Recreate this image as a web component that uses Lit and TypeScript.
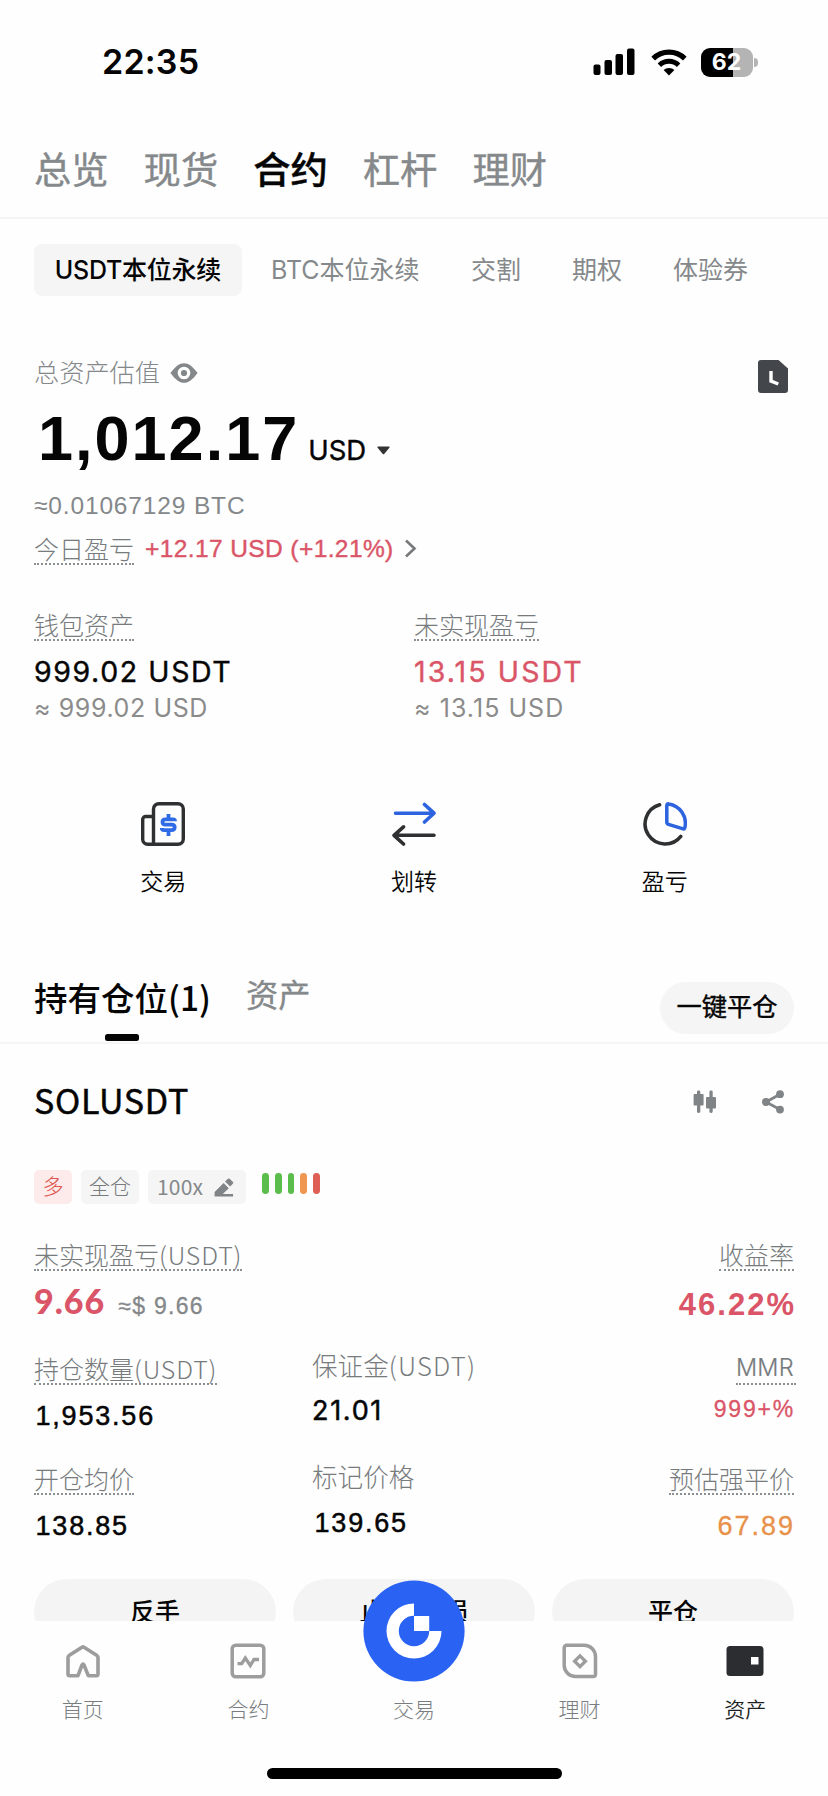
import { LitElement, html, css } from "lit";
import { customElement } from "lit/decorators.js";

const icons = {
  signal: html`<svg width="42" height="28" viewBox="0 0 42 28"><rect x="0.5" y="16.5" width="7" height="10.5" rx="2"/><rect x="11.5" y="12" width="7.5" height="15" rx="2"/><rect x="22.5" y="6" width="7.5" height="21" rx="2"/><rect x="34" y="0.5" width="7.5" height="26.5" rx="2"/></svg>`,
  wifi: html`<svg width="36" height="27" viewBox="0 0 36 27" fill="none" stroke="#000"><path d="M2.2 9.6a22.6 22.6 0 0 1 31.6 0" stroke-width="5.2"/><path d="M8.4 16.2a13.8 13.8 0 0 1 19.2 0" stroke-width="5"/><path d="M18 26.6l-5.4-5.5a7.8 7.8 0 0 1 10.8 0z" fill="#000" stroke="none"/></svg>`,
  eye: html`<svg width="28" height="20" viewBox="0 0 28 20"><path fill="#84888a" d="M.4 10C5.500 3.200 9.500.2 14 .2S22.500 3.200 27.600 10C22.500 16.800 18.500 19.800 14 19.800S5.500 16.800.4 10z"/><circle cx="14" cy="10" r="4.700" fill="#84888a" stroke="#fff" stroke-width="3.200"/></svg>`,
  history: html`<svg width="30" height="33" viewBox="0 0 30 33"><path fill="#43474b" d="M3 0h17.500L30 8.500V30a3 3 0 0 1-3 3H3a3 3 0 0 1-3-3V3a3 3 0 0 1 3-3z"/><path d="M13 11v10l7.300 3" fill="none" stroke="#fff" stroke-width="3.400"/></svg>`,
  caret: html`<svg width="13" height="9" viewBox="0 0 13 9"><path fill="#333" d="M1 .5h11q1 .3.4 1.200L7.200 8q-.7.7-1.400 0L.6 1.700Q0 .8 1 .5z"/></svg>`,
  chevron: html`<svg width="13" height="19" viewBox="0 0 13 19"><path d="M2 1.500l8.500 8L2 17.500" fill="none" stroke="#77797b" stroke-width="2.600"/></svg>`,
  trade: html`<svg width="44" height="44" viewBox="0 0 44 44" fill="none" stroke-width="3.400"><path stroke="#2f3031" d="M12.500 42.300V7a5.300 5.300 0 0 1 5.300-5.300H37A5.300 5.300 0 0 1 42.300 7v30a5.300 5.300 0 0 1-5.300 5.300H6.700a5 5 0 0 1-5-5V17.500a3 3 0 0 1 3-3h7.800"/><path stroke="#2f6be6" stroke-width="3.800" d="M34 19.200v-.2q0-1.700-2-1.700h-7.500q-3 0-3 2.700t3 2.600h6q3.200 0 3.200 2.700 0 2.800-3.200 2.800H23q-2.200 0-2.200-2.200M27.500 12v5M27.500 28.500v5.500"/></svg>`,
  transfer: html`<svg width="44" height="44" viewBox="0 0 44 44" fill="none" stroke-width="3.600" stroke-linecap="round" stroke-linejoin="round"><path stroke="#2d63de" d="M3.500 11.200h38M32.500 2.500l9.500 8.700-9.500 8.800"/><path stroke="#2f3031" d="M42 33.300H3M11.500 24.800L2 33.300l9.500 8.700"/></svg>`,
  pie: html`<svg width="44" height="44" viewBox="0 0 44 44" fill="none" stroke-width="3.500" stroke-linecap="round" stroke-linejoin="round"><path stroke="#2f3031" d="M16.600 2.700a20 20 0 1 0 21.200 31.600"/><path stroke="#2d63de" d="M23.800 3.500q0-2 2-1.600A19.500 19.500 0 0 1 42 25q-.3 2.500-2.600 1.700L25.500 22.300q-1.700-.5-1.700-2.300z"/></svg>`,
  candles: html`<svg width="24" height="24" viewBox="0 0 24 24" fill="#808486"><rect x=".6" y="4" width="10" height="11.500" rx="1"/><rect x="4" y=".5" width="3.300" height="22.500" rx="1.400"/><rect x="13" y="7" width="10" height="11.500" rx="1"/><rect x="16.400" y=".5" width="3.300" height="22.500" rx="1.400"/></svg>`,
  share: html`<svg width="24" height="24" viewBox="0 0 24 24" fill="#808486"><circle cx="5" cy="12" r="4"/><circle cx="19" cy="4.200" r="3.900"/><circle cx="19" cy="19.600" r="3.900"/><path d="M19 4.200L5 12l14 7.600" fill="none" stroke="#808486" stroke-width="2.800"/></svg>`,
  pencil: html`<svg width="20" height="19" viewBox="0 0 20 19" fill="#808486"><path d="M.6 18.500V14L9.600 5l5.200 5.200-6 5.800h10.300v2.500zM11 3.600L14 .8q.8-.6 1.600 0L19 4q.7.8 0 1.600l-2.800 3z"/></svg>`,
  home: html`<svg width="36" height="36" viewBox="0 0 36 36" fill="none" stroke="#9d9d9d" stroke-width="3.600" stroke-linejoin="round"><path d="M3 14.500q0-1.200 1-1.900L17 4.200q1-.6 2 0l13 8.400q1 .7 1 1.900V31q0 1.700-1.700 1.700h-8L19 22q-1-2-2 0l-4 10.700H4.700Q3 32.700 3 31z"/></svg>`,
  contract: html`<svg width="36" height="36" viewBox="0 0 36 36" fill="none" stroke="#9d9d9d"><rect x="2.200" y="2.200" width="31.600" height="31.600" rx="3.500" stroke-width="3.500"/><path stroke-width="3.300" d="M7.500 20.700h4.200l3.600-5.700 5 7.500 3.700-6h5"/></svg>`,
  earn: html`<svg width="36" height="36" viewBox="0 0 36 36" fill="none" stroke="#9d9d9d"><path stroke-width="3.500" d="M4.700 2.200H22A11.300 11.300 0 0 1 33.500 13.500v17.800a2.300 2.300 0 0 1-2.300 2.300H13.500A11.300 11.300 0 0 1 2.200 22.300V4.700a2.500 2.500 0 0 1 2.500-2.500z"/><path stroke-width="3.300" d="M18 12.800l5.400 5.400-5.400 5.400-5.400-5.400z"/></svg>`,
  wallet: html`<svg width="38" height="36" viewBox="0 0 38 36"><rect x=".5" y="3" width="37" height="30" rx="3.500" fill="#2b2d30"/><rect x="25" y="14" width="7.500" height="7.500" fill="#fff"/></svg>`,
  logo: html`<svg width="102" height="102" viewBox="0 0 102 102"><circle cx="51" cy="51" r="50.600" fill="#2a63f4"/><path fill="#fff" d="M51 23.500v12.300A15.200 15.200 0 1 0 66.200 51H78.500A27.500 27.500 0 1 1 51 23.500z"/><rect x="51" y="36" width="15.200" height="15" fill="#fff"/></svg>`,
};

@customElement("app-root")
export class AppRoot extends LitElement {
  static styles = css`
    :host { display: block; position: relative; width: 828px; height: 1796px; overflow: hidden; background: #fefefe; color: #050505;
      font-family: Inter, "Noto Sans CJK SC", sans-serif; white-space: nowrap; }
    * { box-sizing: border-box; }
    svg { display: block; flex: none; }
    .lib { font-family: "Liberation Sans", "Noto Sans CJK SC", sans-serif; }
    .cjk { font-family: "Noto Sans CJK SC", sans-serif; }
    .red { color: #da5567; }
    .orange { color: #e8914a; }
    .grey { color: #84888a; }

    .status { height: 124px; display: flex; align-items: center; padding: 0 70px 0 102px; }
    .time { font-size: 34px; font-weight: 600; line-height: 40px; margin-right: auto; letter-spacing: 0.2px; }
    .signal { margin-right: 16px; }
    .wifi { margin-right: 14px; }
    .battery { display: flex; align-items: center; }
    .cell { width: 52px; height: 29px; border-radius: 9px; background: linear-gradient(90deg, #000 62%, #b4b4b4 62%); color: #fff;
      font-size: 23px; font-weight: 700; line-height: 29px; text-align: center; }
    .nub { width: 4px; height: 9px; margin-left: 1.500px; border-radius: 0 5px 5px 0; background: #b4b4b4; }

    .tabs { height: 95px; padding-left: 34px; display: flex; gap: 35px; border-bottom: 2px solid #f5f5f5; font-size: 37.300px; line-height: 94px; font-weight: 400; color: #85898b; -webkit-text-stroke: 0.400px currentColor; }
    .tabs .on { color: #050505; font-weight: 500; }
    .pills { display: flex; margin: 25px 0 0 34px; height: 52px; font-size: 25px; line-height: 53px; color: #85898b; }
    .pill-on { width: 208px; text-align: center; background: #f5f5f5; border-radius: 8px; color: #050505; font-weight: 500; letter-spacing: -0.250px; }
    .pill-btc { margin-left: 29px; width: 149px; }
    .pill { margin-left: 51px; }

    .page { padding: 0 34px; }
    .est { display: flex; margin-top: 60px; height: 34px; font-size: 25.200px; line-height: 34px; font-weight: 300; }
    .est .eye { margin: 7px auto 0 10px; }
    .est .hist { margin: 4px 6px 0 0; }
    .total { display: flex; align-items: baseline; margin: 18px 0 0 4px; height: 60px; line-height: 60px; font-size: 63px; font-weight: 700; letter-spacing: 2px; }
    .unit { font-family: Inter, sans-serif; font-size: 27.500px; font-weight: 400; letter-spacing: 0; margin-left: 9px; -webkit-text-stroke: 0.400px currentColor; }
    .caret { margin-left: 11px; align-self: baseline; transform: translateY(-5px); }
    .btc { margin-top: 23px; font-size: 24.500px; line-height: 30px; letter-spacing: 0.850px; }
    .today { display: flex; margin-top: 15px; height: 29px; }
    .gain { margin-left: 11px; font-size: 24.500px; line-height: 26px; letter-spacing: 0.400px; -webkit-text-stroke: 0.400px currentColor; }
    .today .chev { margin: 3px 0 0 10px; }
    .lab { display: inline-block; font-family: "Noto Sans CJK SC", sans-serif; font-weight: 300; font-size: 25px; line-height: 24px; padding-bottom: 3px; color: #777b7d; border-bottom: 2px dotted #8c8f91; }
    .lat { letter-spacing: 0.800px; }
    .plain { border-color: transparent; font-size: 25.600px; margin-left: -1px; }
    .plain .lat { letter-spacing: 1.200px; }

    .wallets { display: flex; margin-top: 47px; }
    .wallet { width: 380px; }
    .amount { margin-top: 14px; font-size: 28.500px; line-height: 34px; font-weight: 400; letter-spacing: 1.600px; -webkit-text-stroke: 0.400px currentColor; }
    .amount.red { letter-spacing: 2.100px; }
    .approx { margin-top: 4px; font-size: 25px; line-height: 30px; color: #8b8b8b; letter-spacing: 0.600px; }
    .amount.red + .approx { letter-spacing: 1.050px; }
    .lab-row { height: 29px; display: flex; }

    .actions { display: grid; grid-template-columns: repeat(3, 1fr); margin: 79px 4px 0; }
    .action { display: flex; flex-direction: column; align-items: center; gap: 21px; font-size: 23px; line-height: 30px; font-weight: 350; }

    .sections { display: flex; margin-top: 71px; height: 76px; padding: 0 34px; border-bottom: 2px solid #f5f5f5; }
    .sec-on { display: flex; flex-direction: column; align-items: center; font-weight: 500; font-size: 33.500px; line-height: 57px; }
    .bar { width: 34px; height: 6.500px; margin-top: 9px; border-radius: 2.500px; background: #050505; }
    .sec { margin-left: 35px; font-size: 32.300px; line-height: 56px; font-weight: 400; color: #85898b; -webkit-text-stroke: 0.300px currentColor; }
    .close-all { margin: 14px 0 0 auto; width: 134px; height: 52px; border-radius: 26px; background: #f5f5f5; text-align: center; font-size: 25.300px; line-height: 50px; font-weight: 400; -webkit-text-stroke: 0.400px currentColor; }

    .symbol { display: flex; align-items: center; margin-top: 38px; height: 40px; }
    .name { font-size: 34px; font-weight: 400; line-height: 34px; margin-right: auto; margin-top: -4px; letter-spacing: 0.700px; -webkit-text-stroke: 0.500px currentColor; }
    .share { margin: 0 9px 0 44px; }
    .tags { display: flex; margin-top: 48px; height: 34px; font-size: 21px; line-height: 33px; font-weight: 300; color: #777b7d; }
    .tag { background: #f5f5f6; border-radius: 5px; text-align: center; margin-right: 9px; }
    .tag.long { width: 38px; background: #fcebea; color: #e0534f; }
    .tag.mode { width: 58px; }
    .tag.lev { width: 98px; display: flex; align-items: center; padding-left: 9px; margin-right: 16px; }
    .lev-x { line-height: 30px; width: 57px; margin-top: -2px; text-align: left; font-weight: 400; color: #84888a; letter-spacing: 0.200px; }
    .risk { display: flex; gap: 6px; padding-top: 3px; }
    .risk i { width: 6.800px; height: 21px; border-radius: 3.400px; background: #5bbd4b; }
    .risk .r4 { background: #ef9650; }
    .risk .r5 { background: #dd5f55; }

    .stats { display: grid; grid-template-columns: 279px 1fr 1fr; }
    .stats.a { margin-top: 38px; height: 114px; grid-template-columns: 1fr 1fr; }
    .stats.b { height: 110px; }
    .stats.c { height: 113px; }
    .r { display: flex; flex-direction: column; align-items: flex-end; }
    .pnl { display: flex; align-items: baseline; margin-top: 13px; line-height: 34px; }
    .pnl-big { font-family: Lato, sans-serif; font-weight: 900; font-size: 34px; letter-spacing: 1px; }
    .pnl-small { font-size: 23px; margin-left: 13px; letter-spacing: 1.300px; -webkit-text-stroke: 0.300px currentColor; }
    .roe { margin-top: 17px; font-size: 31px; line-height: 34px; font-weight: 700; letter-spacing: 2px; margin-right: -2px; }
    .num { font-size: 27px; line-height: 30px; letter-spacing: 1.800px; -webkit-text-stroke: 0.500px currentColor; padding-left: 1.500px; }
    .s14 { margin-top: 14px; } .s15 { margin-top: 15px; } .s16 { margin-top: 16px; }
    .up { margin-top: -3px; }
    .upc { margin-top: -2px; }
    .inter { font-size: 27px; font-weight: 400; line-height: 30px; letter-spacing: 1.700px; margin-left: -1px; -webkit-text-stroke: 0.500px currentColor; }
    .mmr { font-size: 23.500px; font-weight: 300; font-family: Inter, sans-serif; line-height: 24px; margin-right: -2px; padding-right: 2px; letter-spacing: 0.300px; -webkit-text-stroke: 0.200px currentColor; }
    .pct { margin-top: 9px; font-size: 23px; line-height: 30px; letter-spacing: 1.800px; margin-right: -1px; -webkit-text-stroke: 0.300px currentColor; }
    .liq { margin-right: -1px; letter-spacing: 2px; -webkit-text-stroke: 0.300px currentColor; }

    .buttons { display: grid; grid-template-columns: repeat(3, 1fr); gap: 17px; }
    .btn { height: 66px; border-radius: 33px; background: #f4f4f5; text-align: center; font-size: 25px; line-height: 67px; font-weight: 500; }

    .nav { position: absolute; left: 0; right: 0; bottom: 0; height: 175px; background: #fefefe; }
    .nav-items { display: grid; grid-template-columns: repeat(5, 1fr); padding-top: 22px; }
    .nav-item { display: flex; flex-direction: column; align-items: center; font-size: 21px; line-height: 30px; font-weight: 300; color: #797d80; gap: 16px; }
    .nav-item.on { color: #1d1f22; font-weight: 350; }
    .slot { height: 36px; }
    .fab { position: absolute; left: 363px; top: -41px; }
    .indicator { width: 295px; height: 11px; border-radius: 6px; background: #000; margin: 43px 0 0 267px; }
  `;

  render() {
    const navItem = (icon: unknown, label: string, on = false) =>
      html`<div class="nav-item ${on ? "on" : ""}"><div class="slot">${icon}</div><span>${label}</span></div>`;
    return html`
      <div class="status">
        <span class="time">22:35</span>
        <span class="signal">${icons.signal}</span><span class="wifi">${icons.wifi}</span>
        <div class="battery"><div class="cell">62</div><div class="nub"></div></div>
      </div>
      <div class="tabs"><span>总览</span><span>现货</span><span class="on">合约</span><span>杠杆</span><span>理财</span></div>
      <div class="pills">
        <span class="pill-on">USDT本位永续</span><span class="pill-btc">BTC本位永续</span>
        <span class="pill">交割</span><span class="pill">期权</span><span class="pill">体验券</span>
      </div>
      <div class="page">
        <div class="est grey"><span>总资产估值</span><span class="eye">${icons.eye}</span><span class="hist">${icons.history}</span></div>
        <div class="total lib"><span>1,012.17</span><span class="unit">USD</span><span class="caret">${icons.caret}</span></div>
        <div class="btc lib grey">≈0.01067129 BTC</div>
        <div class="today"><span class="lab">今日盈亏</span><span class="gain lib red">+12.17 USD (+1.21%)</span><span class="chev">${icons.chevron}</span></div>
        <div class="wallets">
          <div class="wallet"><div class="lab-row"><span class="lab">钱包资产</span></div><div class="amount">999.02 USDT</div><div class="approx">≈ 999.02 USD</div></div>
          <div class="wallet"><div class="lab-row"><span class="lab">未实现盈亏</span></div><div class="amount red">13.15 USDT</div><div class="approx">≈ 13.15 USD</div></div>
        </div>
        <div class="actions">
          <div class="action">${icons.trade}<span>交易</span></div>
          <div class="action">${icons.transfer}<span>划转</span></div>
          <div class="action">${icons.pie}<span>盈亏</span></div>
        </div>
      </div>
      <div class="sections">
        <div class="sec-on cjk"><span>持有仓位(1)</span><div class="bar"></div></div>
        <span class="sec">资产</span>
        <div class="close-all">一键平仓</div>
      </div>
      <div class="page">
        <div class="symbol"><span class="name cjk">SOLUSDT</span>${icons.candles}<span class="share">${icons.share}</span></div>
        <div class="tags">
          <span class="tag long">多</span><span class="tag mode">全仓</span>
          <span class="tag lev"><span class="lev-x cjk">100x</span>${icons.pencil}</span>
          <div class="risk"><i></i><i></i><i></i><i class="r4"></i><i class="r5"></i></div>
        </div>
        <div class="stats a">
          <div><div class="lab-row"><span class="lab">未实现盈亏<span class="lat">(USDT)</span></span></div>
            <div class="pnl"><span class="pnl-big red">9.66</span><span class="pnl-small lib grey">≈$ 9.66</span></div></div>
          <div class="r"><span class="lab">收益率</span><span class="roe lib red">46.22%</span></div>
        </div>
        <div class="stats b">
          <div><div class="lab-row"><span class="lab">持仓数量<span class="lat">(USDT)</span></span></div><div class="num lib s16">1,953.56</div></div>
          <div><div class="lab-row up"><span class="lab plain">保证金<span class="lat">(USDT)</span></span></div><div class="inter s14">21.01</div></div>
          <div class="r"><span class="lab mmr">MMR</span><span class="pct lib red">999+%</span></div>
        </div>
        <div class="stats c">
          <div><div class="lab-row"><span class="lab">开仓均价</span></div><div class="num lib s16">138.85</div></div>
          <div><div class="lab-row upc"><span class="lab plain">标记价格</span></div><div class="num lib s15">139.65</div></div>
          <div class="r"><span class="lab">预估强平价</span><span class="num lib orange liq s16">67.89</span></div>
        </div>
        <div class="buttons"><div class="btn">反手</div><div class="btn">止盈/止损</div><div class="btn">平仓</div></div>
      </div>
      <div class="nav">
        <div class="nav-items">
          ${navItem(icons.home, "首页")}${navItem(icons.contract, "合约")}${navItem("", "交易")}${navItem(icons.earn, "理财")}${navItem(icons.wallet, "资产", true)}
        </div>
        <div class="fab">${icons.logo}</div>
        <div class="indicator"></div>
      </div>
    `;
  }
}
